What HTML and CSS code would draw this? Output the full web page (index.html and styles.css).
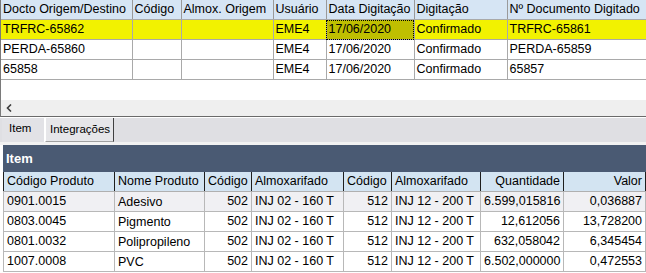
FILE: index.html
```html
<!DOCTYPE html>
<html>
<head>
<meta charset="utf-8">
<link rel="stylesheet" href="styles.css">
</head>
<body>
<div class="top">
  <div class="grid">
    <table class="tg">
      <colgroup>
        <col style="width:131px"><col style="width:49px"><col style="width:92px"><col style="width:53px"><col style="width:88px"><col style="width:93px"><col style="width:139px">
      </colgroup>
      <thead>
        <tr><th>Docto Origem/Destino</th><th>Código</th><th>Almox. Origem</th><th>Usuário</th><th>Data Digitação</th><th>Digitação</th><th>Nº Documento Digitado</th></tr>
      </thead>
      <tbody>
        <tr class="sel"><td>TRFRC-65862</td><td></td><td></td><td>EME4</td><td class="focus">17/06/2020</td><td>Confirmado</td><td>TRFRC-65861</td></tr>
        <tr><td>PERDA-65860</td><td></td><td></td><td>EME4</td><td>17/06/2020</td><td>Confirmado</td><td>PERDA-65859</td></tr>
        <tr><td>65858</td><td></td><td></td><td>EME4</td><td>17/06/2020</td><td>Confirmado</td><td>65857</td></tr>
      </tbody>
    </table>
  </div>
  <div class="hscroll"><svg class="arrow" width="6" height="8" viewBox="0 0 6 8"><path d="M5 0.5 L1.5 4 L5 7.5" fill="none" stroke="#3c3c3c" stroke-width="1.6"/></svg></div>
</div>
<div class="tabs">
  <div class="tab active">Item</div>
  <div class="tab">Integrações</div>
</div>
<div class="panel">
  <div class="ptitle">Item</div>
  <table class="it">
    <colgroup>
      <col style="width:111px"><col style="width:90px"><col style="width:47px"><col style="width:92px"><col style="width:48px"><col style="width:89px"><col style="width:83px"><col style="width:82px">
    </colgroup>
    <thead>
      <tr><th>Código Produto</th><th>Nome Produto</th><th>Código</th><th>Almoxarifado</th><th>Código</th><th>Almoxarifado</th><th class="r">Quantidade</th><th class="r">Valor</th></tr>
    </thead>
    <tbody>
      <tr class="first"><td>0901.0015</td><td class="low">Adesivo</td><td class="r">502</td><td>INJ 02 - 160 T</td><td class="r">512</td><td>INJ 12 - 200 T</td><td class="r">6.599,015816</td><td class="r">0,036887</td></tr>
      <tr><td>0803.0045</td><td class="low">Pigmento</td><td class="r">502</td><td>INJ 02 - 160 T</td><td class="r">512</td><td>INJ 12 - 200 T</td><td class="r">12,612056</td><td class="r">13,728200</td></tr>
      <tr><td>0801.0032</td><td class="low">Polipropileno</td><td class="r">502</td><td>INJ 02 - 160 T</td><td class="r">512</td><td>INJ 12 - 200 T</td><td class="r">632,058042</td><td class="r">6,345454</td></tr>
      <tr><td>1007.0008</td><td class="low">PVC</td><td class="r">502</td><td>INJ 02 - 160 T</td><td class="r">512</td><td>INJ 12 - 200 T</td><td class="r">6.502,000000</td><td class="r">0,472553</td></tr>
    </tbody>
  </table>
</div>
</body>
</html>
```
FILE: styles.css
```css
html, body {
  margin: 0;
  padding: 0;
  background: #ffffff;
  font-family: "Liberation Sans", Arial, sans-serif;
  font-size: 12.5px;
  color: #000;
  width: 646px;
  height: 273px;
  overflow: hidden;
}
.top {
  border-left: 1px solid #7a7a7a;
  border-bottom: 1px solid #6a6a6a;
  height: 116px;
  display: flex;
  flex-direction: column;
}
.grid {
  flex: 1;
  background: #fff;
}
table {
  border-collapse: collapse;
  table-layout: fixed;
}
.tg {
  width: 645px;
}
.tg th, .tg td {
  height: 19px;
  padding: 0 0 0 2px;
  text-align: left;
  font-weight: normal;
  white-space: nowrap;
  overflow: hidden;
  border: 1px solid #a9a9a9;
  border-top: none;
  line-height: 19px;
}
.tg th {
  background: #d6e5f4;
  border-right-color: #9a9a9a;
}
.tg tr > :first-child { border-left: none; }
.tg tr.sel td { background: #f2f200; }
.tg td.focus {
  background: #bfbf00 !important;
  outline: 1px dotted #000;
  outline-offset: -1px;
}
.hscroll {
  height: 16px;
  background: #efefef;
  display: flex;
  align-items: center;
  padding-left: 5px;
}
.tabs {
  border-top: 1px solid #fff;
  background: #dfdfe3;
  display: flex;
  align-items: flex-start;
  padding-left: 2px;
  border-bottom: 3px solid #f2f2f2;
  box-sizing: border-box;
  height: 28px;
}
.tab {
  font-family: "Liberation Sans", Tahoma, sans-serif;
  font-size: 11.5px;
  box-sizing: border-box;
}
.tab.active {
  width: 43px;
  padding-left: 7px;
  padding-top: 4px;
  border-right: 1px solid #fff;
  background: #e2e2e6;
  height: 24px;
}
.tab:not(.active) {
  padding: 5px 3px 0 4px;
  height: 24px;
  border-left: 1px solid #fff;
  border-right: 1px solid #404040;
  border-bottom: 1px solid #a0a0a0;
  background: #e6e6e9;
}
.panel {
  margin-left: 3px;
}
.ptitle {
  background: #4a5a73;
  color: #fff;
  font-weight: bold;
  font-size: 13px;
  height: 27px;
  line-height: 27px;
  padding-left: 3px;
}
.it {
  width: 642px;
}
.it th, .it td {
  height: 19px;
  padding: 0 2px 0 3px;
  font-weight: normal;
  text-align: left;
  white-space: nowrap;
  overflow: hidden;
  line-height: 19px;
  border: 1px solid #b8b8b8;
}
.it th {
  background: #d3e4f2;
  border-left: 1px solid #1e1e1e;
  border-right: 1px solid #1e1e1e;
  border-bottom: 1px solid #b0b0b0;
  border-top: none;
}
.it .r { text-align: right; padding-right: 3px; }
.it tr.first td { background: #f0f0f3; }
.it td.low { padding-top: 2px; height: 17px; line-height: 17px; }
```
